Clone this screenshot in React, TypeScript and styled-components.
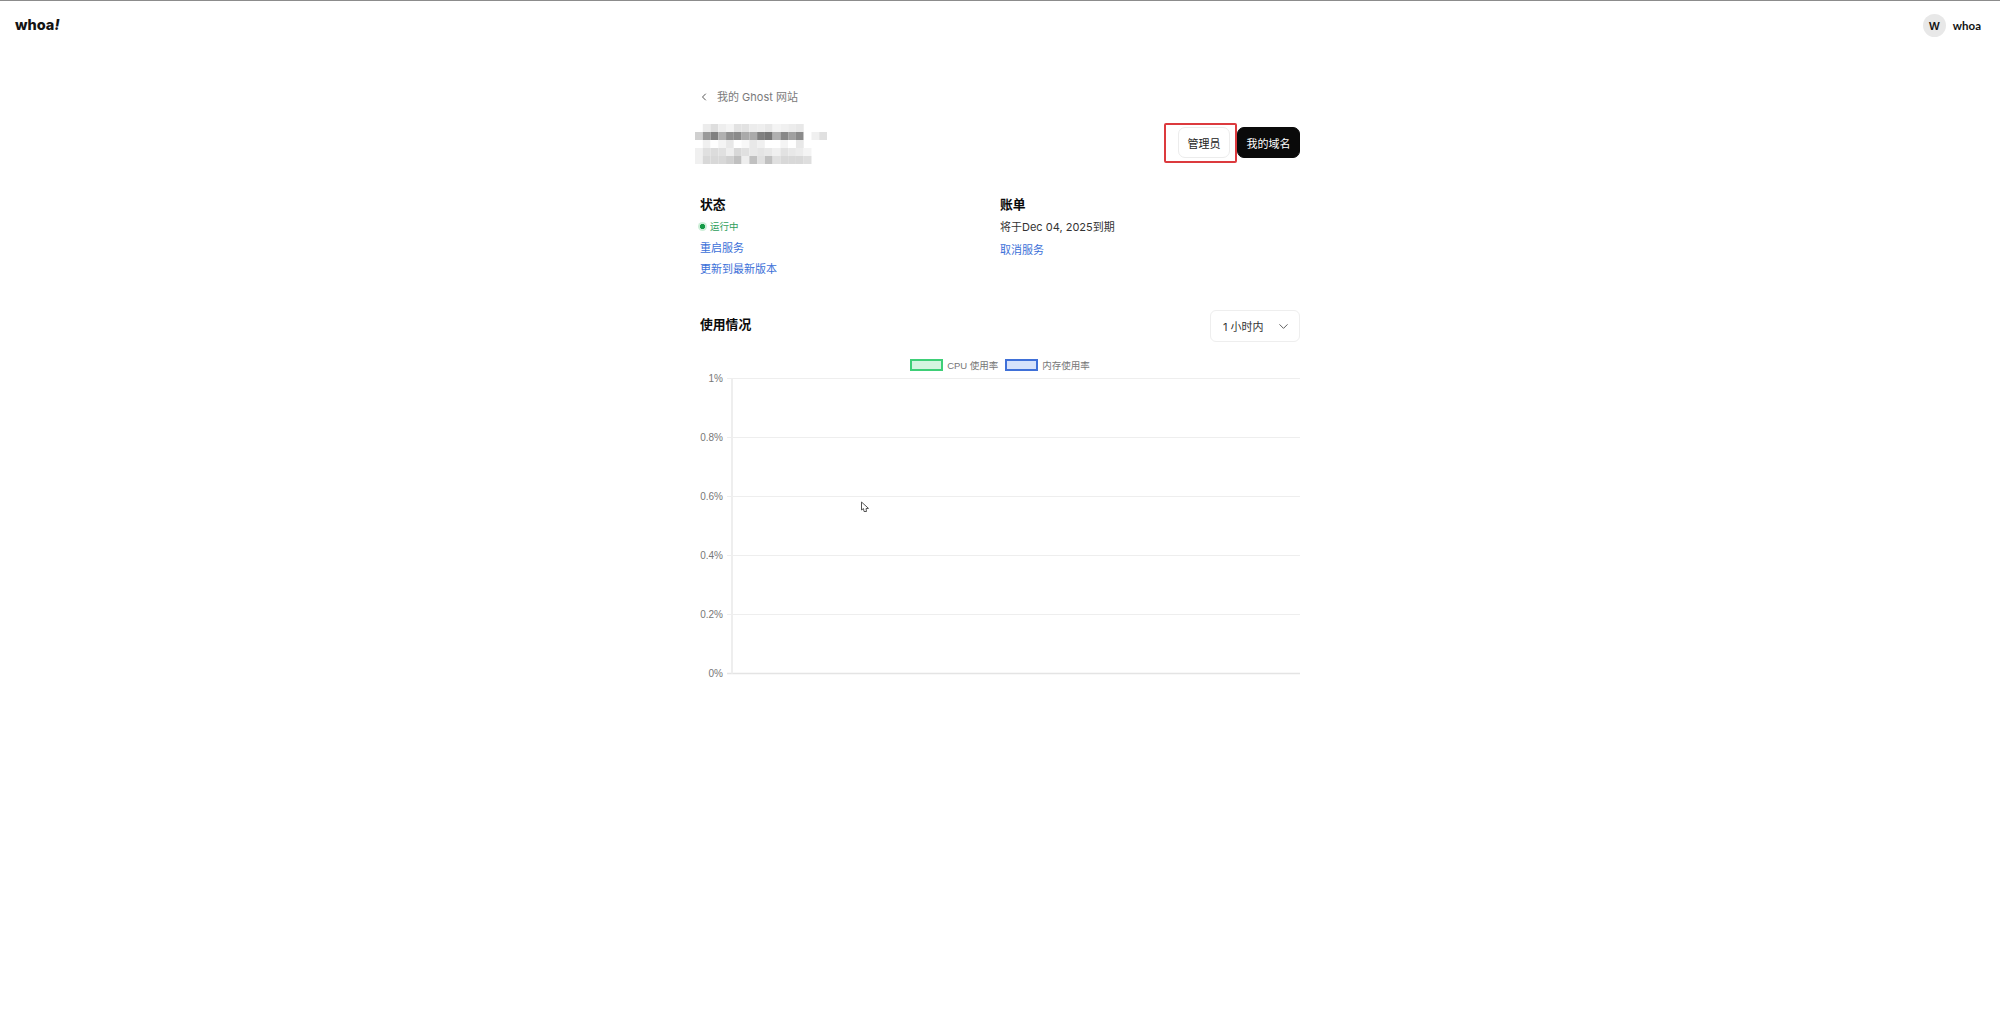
import React from 'react';
import styled, { createGlobalStyle } from 'styled-components';
import { ChevronDown, ChevronLeft } from 'lucide-react';

const GlobalStyle = createGlobalStyle`
  html, body {
    margin: 0;
    padding: 0;
    background: #fff;
    font-family: Inter, "Noto Sans CJK SC", sans-serif;
    color: #111;
  }
`;

const Header = styled.header`
  display: flex;
  justify-content: space-between;
  align-items: center;
  height: 49px;
  padding: 0 19px 0 15px;
  border-top: 1px solid #8c8c8c;
`;

const Logo = styled.div`
  margin-top: -2px;
  font-family: Inter, sans-serif;
  font-size: 14.5px;
  font-weight: 800;
  color: #141414;
  em {
    font-style: italic;
  }
`;

const UserMenu = styled.div`
  display: flex;
  align-items: center;
  gap: 7px;
`;

const Avatar = styled.div`
  display: flex;
  align-items: center;
  justify-content: center;
  width: 23px;
  height: 23px;
  border-radius: 50%;
  background: #e8e8e8;
  font-size: 11px;
  font-weight: 600;
`;

const UserName = styled.span`
  font-family: Lato, sans-serif;
  font-size: 11.5px;
  font-weight: 700;
`;

const Main = styled.main`
  position: relative;
  width: 600px;
  margin: 0 auto;
  padding-top: 39px;
`;

const BackLink = styled.div`
  display: flex;
  align-items: center;
  gap: 7px;
  height: 16px;
  margin-left: -2px;
  font-size: 11px;
  line-height: 16px;
  color: #7a7a7a;
`;

const TitleRow = styled.div`
  display: flex;
  justify-content: space-between;
  align-items: flex-start;
  height: 40px;
  margin-top: 19px;
`;

const Mosaic = styled.svg`
  display: block;
  margin-left: -5px;
  filter: blur(0.6px);
`;

const Actions = styled.div`
  display: flex;
  gap: 7px;
  margin-top: 3px;
`;

const Button = styled.button<{ $dark?: boolean }>`
  position: relative;
  height: 31px;
  padding: 0 8.5px;
  border: 1px solid ${props => (props.$dark ? '#0a0a0a' : '#ececec')};
  border-radius: 7px;
  background: ${props => (props.$dark ? '#0a0a0a' : '#fff')};
  color: ${props => (props.$dark ? '#fff' : '#222')};
  font-family: inherit;
  font-size: 11px;
`;

const Highlight = styled.span`
  position: absolute;
  inset: -5px -8px -6px -15px;
  border: 2px solid #dc3a3e;
  border-radius: 2px;
  pointer-events: none;
`;

const InfoGrid = styled.div`
  display: grid;
  grid-template-columns: 300px 300px;
  margin-top: 33px;
`;

const InfoColumn = styled.div`
  display: flex;
  flex-direction: column;
`;

const Heading = styled.h2`
  margin: 0;
  font-size: 12.8px;
  font-weight: 700;
  line-height: 16px;
  color: #0a0a0a;
`;

const UsageTitle = styled(Heading)`
  margin-bottom: 2px;
`;

const Status = styled.div`
  display: flex;
  align-items: center;
  gap: 3px;
  height: 16px;
  margin-top: 5px;
  margin-left: -2px;
  font-size: 9.5px;
  color: #2f9e5b;
`;

const StatusDot = styled.span`
  width: 9px;
  height: 9px;
  border-radius: 50%;
  background: radial-gradient(circle, #159a46 0 2.4px, #cdeed8 2.9px);
`;

const Plain = styled.div`
  height: 16px;
  margin-top: 6px;
  font-size: 11px;
  line-height: 16px;
  color: #333;
`;

const ActionLink = styled.a<{ $gap?: number }>`
  height: 16px;
  margin-top: ${props => props.$gap ?? 6}px;
  font-size: 11px;
  line-height: 16px;
  color: #3b6fd8;
`;

const UsageRow = styled.div`
  display: flex;
  justify-content: space-between;
  align-items: center;
  margin-top: 33px;
`;

const RangeSelect = styled.div`
  display: flex;
  justify-content: space-between;
  align-items: center;
  box-sizing: border-box;
  width: 90px;
  height: 32px;
  padding: 0 8px 0 12px;
  border: 1px solid #eeeeee;
  border-radius: 6px;
  font-size: 11px;
  color: #333;
`;

const Legend = styled.div`
  display: flex;
  justify-content: center;
  align-items: center;
  gap: 7px;
  height: 16px;
  margin-top: 15px;
  font-family: "Liberation Sans", "Noto Sans CJK SC", sans-serif;
  font-size: 9.5px;
  color: #777;
`;

const LegendItem = styled.div`
  display: flex;
  align-items: center;
  gap: 4px;
`;

const Swatch = styled.span<{ $stroke: string; $fill: string }>`
  box-sizing: border-box;
  width: 33px;
  height: 12px;
  border: 2px solid ${props => props.$stroke};
  background: ${props => props.$fill};
`;

const Chart = styled.svg`
  display: block;
  font-family: "Liberation Sans", sans-serif;
  font-size: 10px;
`;

const Cursor = styled.svg`
  position: absolute;
  left: 160px;
  top: 451px;
`;

// grey values of the blurred block, one row per 8px
const mosaicRows = [
  [255, 236, 222, 238, 244, 226, 226, 236, 238, 232, 244, 240, 236, 232],
  [208, 154, 128, 176, 144, 138, 170, 170, 128, 119, 176, 136, 160, 138, 255, 240, 224],
  [255, 240, 255, 244, 232, 255, 248, 232, 240, 255, 255, 244, 255, 232],
  [240, 224, 220, 224, 238, 216, 224, 232, 228, 232, 240, 226, 232, 236, 244],
  [240, 216, 216, 216, 208, 192, 238, 192, 224, 192, 224, 216, 216, 216, 222],
];

const ticks = ['1%', '0.8%', '0.6%', '0.4%', '0.2%', '0%'];

export default function App() {
  return (
    <>
      <GlobalStyle />
      <Header>
        <Logo>
          whoa<em>!</em>
        </Logo>
        <UserMenu>
          <Avatar>W</Avatar>
          <UserName>whoa</UserName>
        </UserMenu>
      </Header>
      <Main>
        <BackLink>
          <ChevronLeft size={12} color="#555" />
          我的 Ghost 网站
        </BackLink>
        <TitleRow>
          <Mosaic width={132} height={40} viewBox="0 0 136 40" preserveAspectRatio="none">
            {mosaicRows.map((row, y) =>
              row.map((v, x) => (
                <rect key={`${x}-${y}`} x={x * 8} y={y * 8} width={8} height={8} fill={`rgb(${v},${v},${v})`} />
              ))
            )}
          </Mosaic>
          <Actions>
            <Button>
              管理员
              <Highlight />
            </Button>
            <Button $dark>我的域名</Button>
          </Actions>
        </TitleRow>
        <InfoGrid>
          <InfoColumn>
            <Heading>状态</Heading>
            <Status>
              <StatusDot />
              运行中
            </Status>
            <ActionLink>重启服务</ActionLink>
            <ActionLink $gap={5}>更新到最新版本</ActionLink>
          </InfoColumn>
          <InfoColumn>
            <Heading>账单</Heading>
            <Plain>将于Dec 04, 2025到期</Plain>
            <ActionLink $gap={7}>取消服务</ActionLink>
          </InfoColumn>
        </InfoGrid>
        <UsageRow>
          <UsageTitle>使用情况</UsageTitle>
          <RangeSelect>
            1 小时内
            <ChevronDown size={15} color="#555" strokeWidth={1.5} />
          </RangeSelect>
        </UsageRow>
        <Legend>
          <LegendItem>
            <Swatch $stroke="#3ecf77" $fill="#d5f5e0" />
            CPU 使用率
          </LegendItem>
          <LegendItem>
            <Swatch $stroke="#3f70d8" $fill="#d6e2fb" />
            内存使用率
          </LegendItem>
        </Legend>
        <Chart width={600} height={310} viewBox="0 0 600 310">
          {ticks.map((label, i) => {
            const y = 5.5 + i * 59;
            return (
              <g key={label}>
                <line x1={27} x2={600} y1={y} y2={y} stroke={i === 5 ? '#e4e4e4' : '#eeeeee'} strokeWidth={i === 5 ? 1.5 : 1} />
                <text x={23} y={y + 3.5} textAnchor="end" fill="#777">
                  {label}
                </text>
              </g>
            );
          })}
          <line x1={32} x2={32} y1={5} y2={300.5} stroke="#eeeeee" strokeWidth={2} />
        </Chart>
        <Cursor width={10} height={12} viewBox="0 0 10 12">
          <path d="M1.5 1 L1.5 9 L3.5 7.6 L4 10.5 L6.5 10.5 L6 7.6 L8.5 7.4 Z" fill="#fff" stroke="#555" strokeWidth={1} strokeLinejoin="round" />
        </Cursor>
      </Main>
    </>
  );
}
